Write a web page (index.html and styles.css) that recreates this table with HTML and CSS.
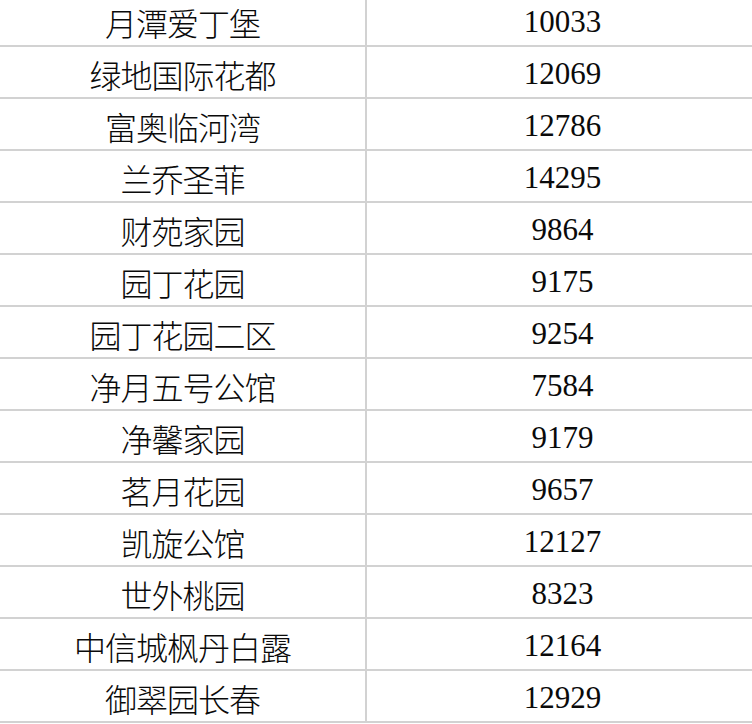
FILE: index.html
```html
<!DOCTYPE html>
<html lang="zh">
<head>
<meta charset="utf-8">
<link rel="stylesheet" href="styles.css">
</head>
<body>
<div class="sheet">
  <div class="row"><div class="name">月潭爱丁堡</div><div class="num">10033</div></div>
  <div class="row"><div class="name">绿地国际花都</div><div class="num">12069</div></div>
  <div class="row"><div class="name">富奥临河湾</div><div class="num">12786</div></div>
  <div class="row"><div class="name">兰乔圣菲</div><div class="num">14295</div></div>
  <div class="row"><div class="name">财苑家园</div><div class="num">9864</div></div>
  <div class="row"><div class="name">园丁花园</div><div class="num">9175</div></div>
  <div class="row"><div class="name">园丁花园二区</div><div class="num">9254</div></div>
  <div class="row"><div class="name">净月五号公馆</div><div class="num">7584</div></div>
  <div class="row"><div class="name">净馨家园</div><div class="num">9179</div></div>
  <div class="row"><div class="name">茗月花园</div><div class="num">9657</div></div>
  <div class="row"><div class="name">凯旋公馆</div><div class="num">12127</div></div>
  <div class="row"><div class="name">世外桃园</div><div class="num">8323</div></div>
  <div class="row"><div class="name">中信城枫丹白露</div><div class="num">12164</div></div>
  <div class="row"><div class="name">御翠园长春</div><div class="num">12929</div></div>
</div>
</body>
</html>
```

FILE: styles.css
```css
html, body {
  margin: 0;
  padding: 0;
  background: #ffffff;
  overflow: hidden;
  width: 752px;
  height: 724px;
}
.sheet {
  margin-top: -5px;
  width: 758px;
  display: flex;
  flex-direction: column;
}
.row {
  display: grid;
  grid-template-columns: 367px 391px;
  height: 52px;
  box-sizing: border-box;
  border-bottom: 2px solid #d2d2d2;
}
.name, .num {
  display: flex;
  align-items: center;
  justify-content: center;
  color: #0a0a0a;
}
.name {
  border-right: 2px solid #d2d2d2;
  font-family: "Noto Sans CJK SC", sans-serif;
  font-weight: 300;
  font-size: 32px;
  letter-spacing: -1px;
  padding-top: 3px;
  box-sizing: border-box;
}
.num {
  font-family: "Liberation Serif", serif;
  font-size: 31px;
  padding-top: 4px;
  box-sizing: border-box;
}
```
